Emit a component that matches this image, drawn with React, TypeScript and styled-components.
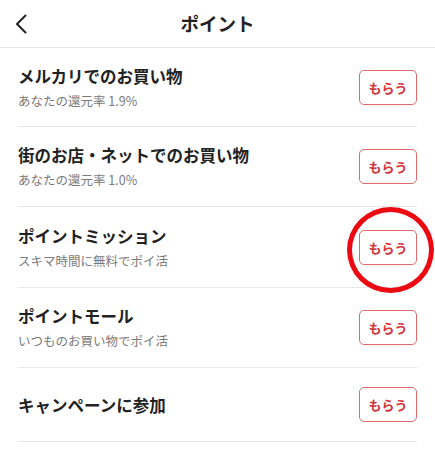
import React from "react";
import styled, { createGlobalStyle } from "styled-components";

const GlobalStyle = createGlobalStyle`
  html, body {
    margin: 0;
    padding: 0;
    background: #ffffff;
  }
  body {
    font-family: "Noto Sans CJK JP", "Noto Sans", sans-serif;
    color: #222222;
  }
`;

const Page = styled.div`
  width: 435px;
  background: #ffffff;
`;

const Header = styled.header`
  height: 47px;
  border-bottom: 1px solid #e6e6e6;
  display: grid;
  grid-template-columns: 48px 1fr 48px;
  align-items: center;
`;

const BackButton = styled.button`
  border: none;
  background: none;
  padding: 0 0 0 14px;
  height: 47px;
  display: flex;
  align-items: center;
  cursor: pointer;
`;

const Title = styled.h1`
  margin: 0;
  text-align: center;
  font-size: 18.5px;
  font-weight: 700;
  color: #222222;
  line-height: 47px;
  letter-spacing: 0;
`;

const List = styled.ul`
  list-style: none;
  margin: 0 18px;
  padding: 0;
`;

const Row = styled.li<{ $h: number }>`
  height: ${(p) => p.$h}px;
  border-bottom: 1px solid #e8e8e8;
  display: flex;
  align-items: center;
  justify-content: space-between;
  box-sizing: border-box;
`;

const TextCol = styled.div`
  display: flex;
  flex-direction: column;
  gap: 5px;
`;

const ItemTitle = styled.div`
  font-size: 16.5px;
  font-weight: 700;
  line-height: 22px;
  color: #222222;
  white-space: nowrap;
`;

const ItemSub = styled.div`
  font-size: 12.5px;
  line-height: 18px;
  color: #7a7a7a;
  white-space: nowrap;
`;

const ButtonWrap = styled.div`
  position: relative;
  display: flex;
`;

const GetButton = styled.button`
  width: 58px;
  height: 35px;
  box-sizing: border-box;
  border: 1px solid #e06a6a;
  border-radius: 5px;
  background: #ffffff;
  color: #d0353b;
  font-family: "Noto Sans CJK JP", "Noto Sans", sans-serif;
  font-size: 13px;
  font-weight: 700;
  padding: 0;
  cursor: pointer;
`;

const Highlight = styled.span`
  position: absolute;
  left: -12px;
  top: -23px;
  width: 87px;
  height: 86px;
  box-sizing: border-box;
  border: 5px solid #ec0a12;
  border-radius: 50%;
  pointer-events: none;
`;

type Item = { title: string; sub?: string; highlight?: boolean; h: number };

const items: Item[] = [
  { title: "メルカリでのお買い物", sub: "あなたの還元率 1.9%", h: 79 },
  { title: "街のお店・ネットでのお買い物", sub: "あなたの還元率 1.0%", h: 80 },
  { title: "ポイントミッション", sub: "スキマ時間に無料でポイ活", highlight: true, h: 81 },
  { title: "ポイントモール", sub: "いつものお買い物でポイ活", h: 80 },
  { title: "キャンペーンに参加", h: 74 },
];

export default function App() {
  return (
    <Page>
      <GlobalStyle />
      <Header>
        <BackButton aria-label="戻る">
          <svg width="14" height="20" viewBox="0 0 14 20" fill="none">
            <polyline
              points="11.5,1.5 3,10 11.5,18.5"
              stroke="#222222"
              strokeWidth="2"
              strokeLinecap="round"
              strokeLinejoin="round"
            />
          </svg>
        </BackButton>
        <Title>ポイント</Title>
        <div />
      </Header>
      <List>
        {items.map((it) => (
          <Row key={it.title} $h={it.h}>
            <TextCol>
              <ItemTitle>{it.title}</ItemTitle>
              {it.sub && <ItemSub>{it.sub}</ItemSub>}
            </TextCol>
            <ButtonWrap>
              <GetButton>もらう</GetButton>
              {it.highlight && <Highlight />}
            </ButtonWrap>
          </Row>
        ))}
      </List>
    </Page>
  );
}
